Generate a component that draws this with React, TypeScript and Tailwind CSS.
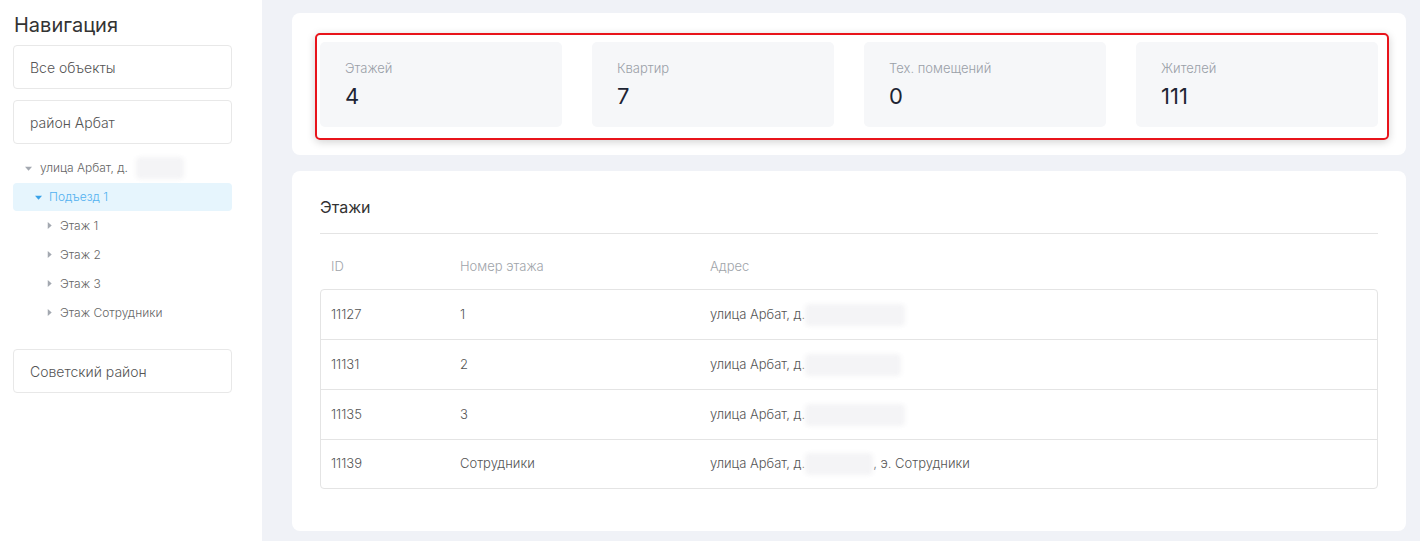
import React from "react";

const stats = [
  { label: "Этажей", value: "4" },
  { label: "Квартир", value: "7" },
  { label: "Тех. помещений", value: "0" },
  { label: "Жителей", value: "111" },
];

const floors = [
  { id: "11127", num: "1", blur: 100, tail: "" },
  { id: "11131", num: "2", blur: 96, tail: "" },
  { id: "11135", num: "3", blur: 100, tail: "" },
  { id: "11139", num: "Сотрудники", blur: 68, tail: ", э. Сотрудники" },
];

function Caret({ color = "#a3a8b0", open = false }: { color?: string; open?: boolean }) {
  return (
    <svg width="7" height="7" viewBox="0 0 8 8" className="shrink-0">
      {open ? (
        <path d="M0 2 L8 2 L4 6.5 Z" fill={color} />
      ) : (
        <path d="M2 0 L6.5 4 L2 8 Z" fill={color} />
      )}
    </svg>
  );
}

function Blurred({ w }: { w: number }) {
  return (
    <span
      className="inline-block h-[22px] align-middle bg-[#f4f4f6] blur-[2px] rounded"
      style={{ width: w }}
    />
  );
}

export default function App() {
  return (
    <div
      className="flex w-[1420px] h-[541px] bg-[#f0f2f7] text-[#555] overflow-hidden font-light"
      style={{ fontFamily: "Inter, 'Noto Sans', sans-serif" }}
    >
      {/* sidebar */}
      <aside className="w-[262px] shrink-0 bg-white pl-[13px] pr-[30px] pt-[12px]">
        <h2 className="text-[20px] leading-[26px] text-[#333] pl-[1px] mb-[7px] font-normal">Навигация</h2>
        <div className="h-[44px] border border-[#e8e8e8] rounded-[4px] flex items-center pl-[16px] text-[14px] text-[#555]">
          Все объекты
        </div>
        <div className="mt-[11px] h-[44px] border border-[#e8e8e8] rounded-[4px] flex items-center pl-[16px] text-[14px] text-[#555]">
          район Арбат
        </div>
        <div className="mt-[11px] h-[26px] flex items-center gap-[8px] pl-[12px] text-[12px] text-[#666]">
          <Caret open />
          <span>улица Арбат, д.</span>
          <Blurred w={48} />
        </div>
        <div className="mt-[2px] h-[28px] rounded-[4px] bg-[#e6f5fd] flex items-center gap-[7px] pl-[22px] text-[12px] text-[#52b1f0]">
          <Caret open color="#3aa2e8" />
          <span>Подъезд 1</span>
        </div>
        {["Этаж 1", "Этаж 2", "Этаж 3", "Этаж Сотрудники"].map((t) => (
          <div key={t} className="h-[29px] flex items-center gap-[7px] pl-[33px] text-[12px] text-[#666]">
            <Caret />
            <span>{t}</span>
          </div>
        ))}
        <div className="mt-[22px] h-[44px] border border-[#e8e8e8] rounded-[4px] flex items-center pl-[16px] text-[14px] text-[#555]">
          Советский район
        </div>
      </aside>

      {/* main */}
      <main className="flex-1 pl-[30px] pr-[14px] pt-[13px] flex flex-col gap-[16px]">
        <section className="bg-white rounded-[8px] px-[28px] pt-[29px] pb-[28px]">
          <div className="relative grid grid-cols-4 gap-[30px]">
            <div className="absolute -left-[5px] -right-[11px] -top-[9px] -bottom-[13px] border-2 border-[#e8141b] rounded-[5px] shadow-[0_2px_8px_rgba(0,0,0,0.18)] pointer-events-none" />
            {stats.map((s) => (
              <div key={s.label} className="h-[85px] bg-[#f6f7f9] rounded-[5px] pl-[25px] pt-[18px]">
                <div className="text-[13px] leading-[16px] text-[#9aa0a8]">{s.label}</div>
                <div className="mt-[7px] text-[22px] leading-[26px] text-[#1d2433] font-normal">{s.value}</div>
              </div>
            ))}
          </div>
        </section>

        <section className="bg-white rounded-[8px] px-[28px] pt-[26px] pb-[42px]">
          <h3 className="text-[16px] leading-[20px] text-[#333] pb-[16px] border-b border-[#e4e4e4] font-normal">Этажи</h3>
          <div className="grid grid-cols-[140px_250px_1fr] h-[55px] items-center text-[13px] text-[#a0a4aa] pt-[11px]">
            <div className="pl-[11px]">ID</div>
            <div>Номер этажа</div>
            <div>Адрес</div>
          </div>
          <div className="border border-[#e4e4e4] rounded-[4px]">
            {floors.map((f, i) => (
              <div
                key={f.id}
                className={`grid grid-cols-[139px_250px_1fr] items-center text-[13px] text-[#555] ${i > 0 ? "border-t border-[#e4e4e4]" : ""} ${i === 0 || i === 3 ? "h-[49px]" : "h-[50px]"}`}
              >
                <div className="pl-[10px]">{f.id}</div>
                <div>{f.num}</div>
                <div className="flex items-center">
                  <span>улица Арбат, д.</span>
                  <Blurred w={f.blur} />
                  {f.tail && <span>{f.tail}</span>}
                </div>
              </div>
            ))}
          </div>
        </section>
      </main>
    </div>
  );
}
